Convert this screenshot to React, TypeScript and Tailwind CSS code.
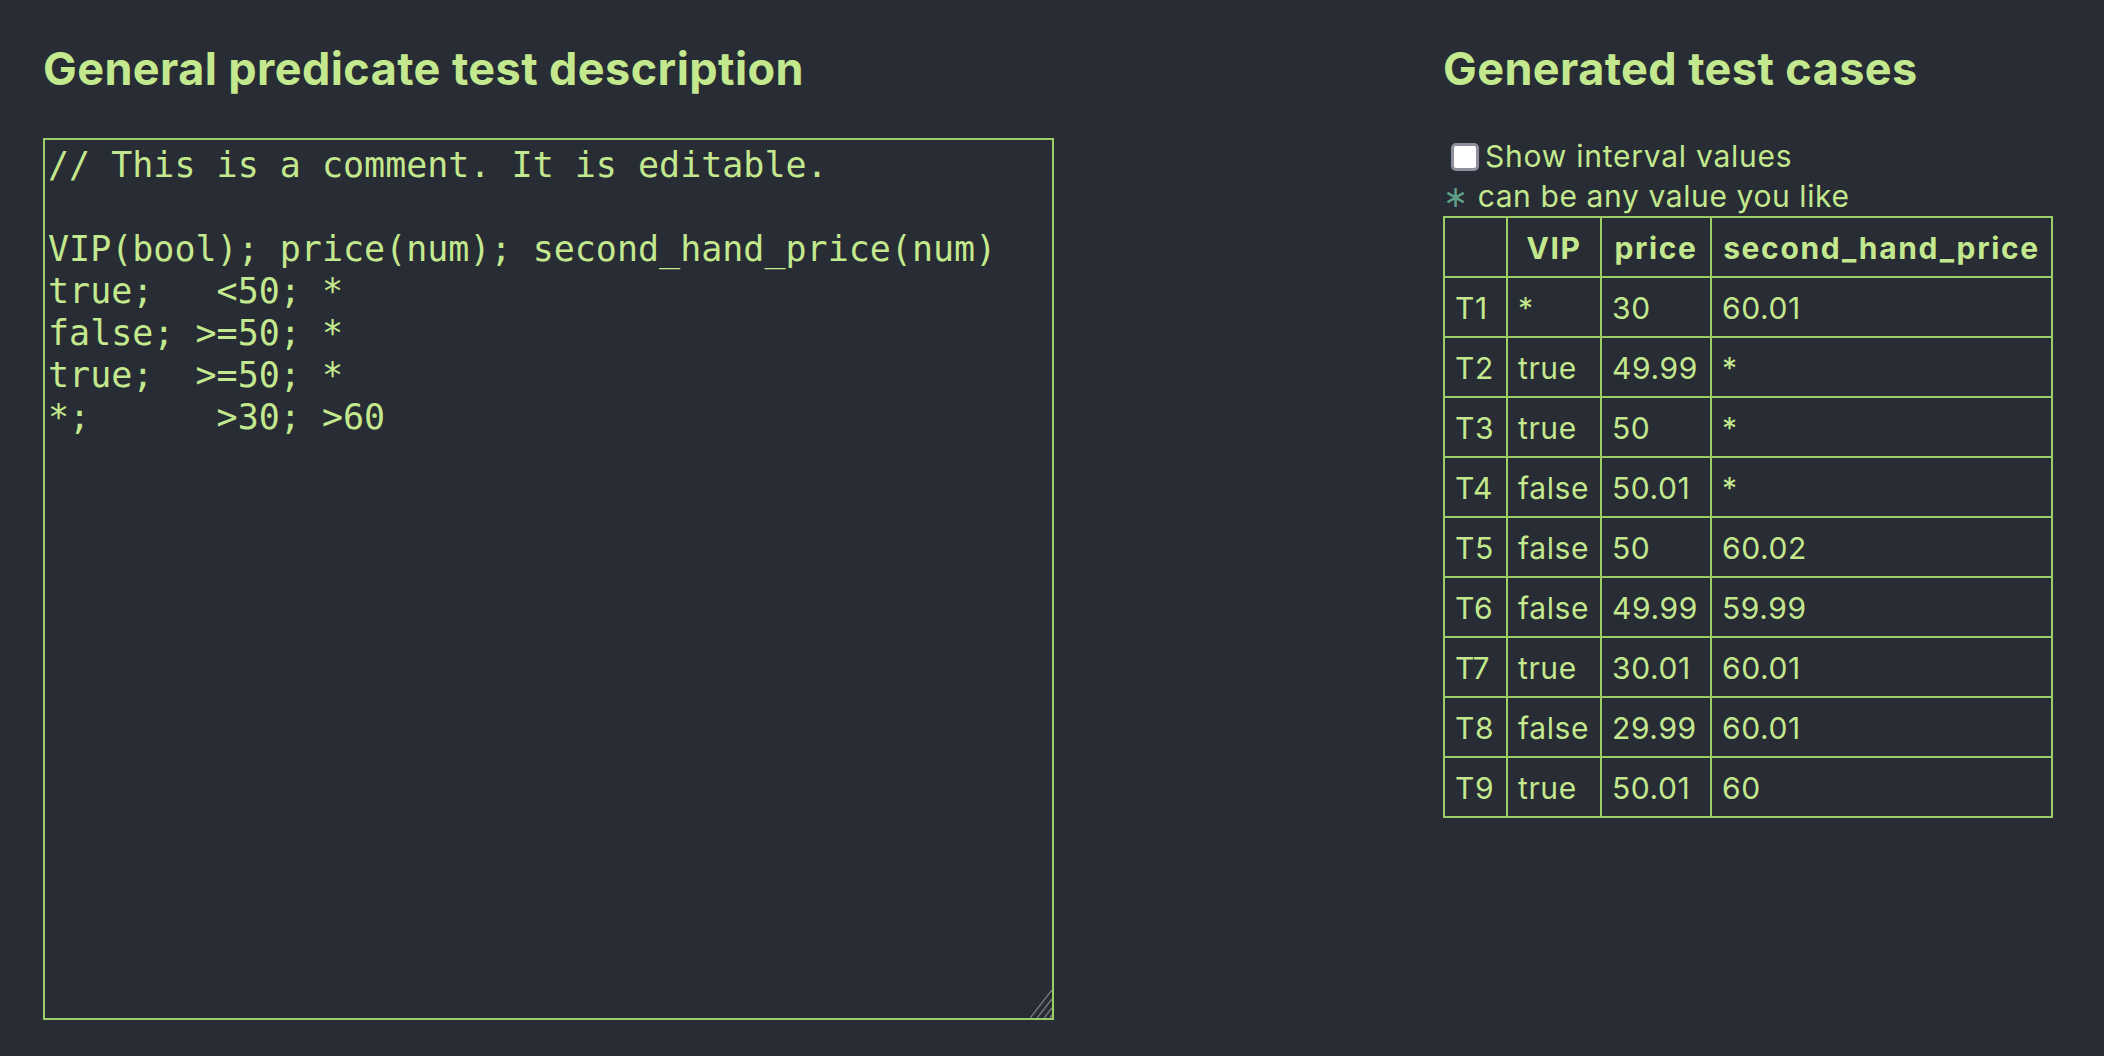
const rows = [
  ["T1", "*", "30", "60.01"],
  ["T2", "true", "49.99", "*"],
  ["T3", "true", "50", "*"],
  ["T4", "false", "50.01", "*"],
  ["T5", "false", "50", "60.02"],
  ["T6", "false", "49.99", "59.99"],
  ["T7", "true", "30.01", "60.01"],
  ["T8", "false", "29.99", "60.01"],
  ["T9", "true", "50.01", "60"],
];

const source = `// This is a comment. It is editable.

VIP(bool); price(num); second_hand_price(num)
true;   <50; *
false; >=50; *
true;  >=50; *
*;      >30; >60`;

const cell = "border-2 border-[#9ccc65] px-[10px] pt-[12px] pb-[10px] leading-[36px] text-left font-normal tracking-[0.02em]";
const head = "border-2 border-[#9ccc65] px-[10px] pt-[12px] pb-[10px] leading-[36px] text-center font-bold tracking-[0.055em]";

// the diagonal grip drawn in the textarea's corner
function Grip() {
  const lines = [
    [2, 28, 24, 0],
    [9, 28, 24, 9],
    [16, 28, 24, 18],
    [22, 28, 24, 25],
  ];
  return (
    <svg
      width="24"
      height="28"
      viewBox="0 0 24 28"
      className="pointer-events-none absolute right-[2px] bottom-[2px]"
    >
      {lines.map(([x1, y1, x2, y2], i) => (
        <g key={i}>
          <line x1={x1 - 1.5} y1={y1} x2={x2} y2={y2 + 2} stroke="#1c1e22" strokeWidth="1.5" />
          <line x1={x1} y1={y1} x2={x2} y2={y2} stroke="#74767a" strokeWidth="1.5" />
        </g>
      ))}
    </svg>
  );
}

export default function App() {
  return (
    <div className="min-h-screen w-full bg-[#282c34] text-[#c3e88d] font-['Inter',sans-serif]">
      <div className="flex gap-[389px] pl-[43px]">
        <section className="w-[1011px] shrink-0">
          <h2 className="pt-[41px] mb-[42px] text-[45px] leading-[55px] font-bold tracking-[0.009em]">
            General predicate test description
          </h2>
          <div className="relative w-[1011px] h-[882px]">
            <textarea
              defaultValue={source}
              spellCheck={false}
              className="box-border block w-full h-full resize-none border-2 border-[#9ccc65] bg-transparent pt-[4px] pl-[3px] font-['DejaVu_Sans_Mono',monospace] text-[35px] leading-[42px] text-[#c3e88d] outline-none"
            />
            <Grip />
          </div>
        </section>

        <section className="shrink-0">
          <h2 className="pt-[41px] mb-[42px] text-[45px] leading-[55px] font-bold tracking-[0.009em]">
            Generated test cases
          </h2>
          <label className="flex h-[40px] items-start text-[30px] leading-[36px]">
            <input
              type="checkbox"
              className="mt-[5px] ml-[8px] mr-[6px] h-[28px] w-[28px] appearance-none rounded-[5px] border-[3px] border-[#8e8e9c] bg-white"
            />
            <span className="tracking-[0.025em]">Show interval values</span>
          </label>
          <p className="text-[30px] leading-[36px] tracking-[0.02em]">
            <span className="text-[#5f9f88]">∗</span> can be any value you like
          </p>
          <table className="mt-[2px] w-[610px] table-fixed border-collapse text-[30px]">
            <colgroup>
              <col className="w-[63px]" />
              <col className="w-[94px]" />
              <col className="w-[110px]" />
              <col />
            </colgroup>
            <thead>
              <tr>
                <th className={head}></th>
                <th className={head}>VIP</th>
                <th className={head}>price</th>
                <th className={head}>second_hand_price</th>
              </tr>
            </thead>
            <tbody>
              {rows.map((r) => (
                <tr key={r[0]}>
                  {r.map((v, i) => (
                    <td key={i} className={cell}>
                      {v}
                    </td>
                  ))}
                </tr>
              ))}
            </tbody>
          </table>
        </section>
      </div>
    </div>
  );
}
